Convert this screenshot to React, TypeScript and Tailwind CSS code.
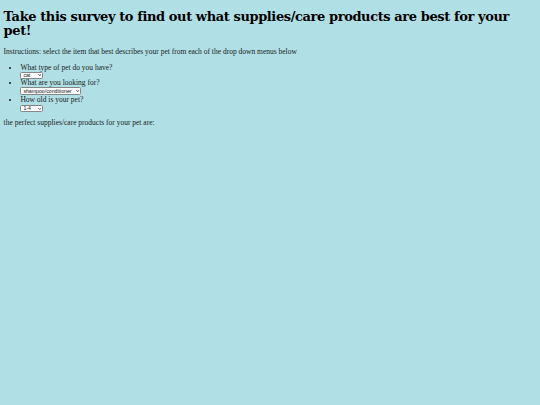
import React from "react";

const heading = { fontFamily: '"DejaVu Serif", Georgia, serif' };
const body = { fontFamily: '"Liberation Serif", "Times New Roman", serif' };
const ui = { fontFamily: '"Liberation Sans", Arial, sans-serif' };

function Dropdown({ options, width, box }: { options: string[]; width: string; box: string }) {
  return (
    <span className={`relative block ${width} ${box}`}>
      <select
        defaultValue={options[0]}
        className="block h-full w-full appearance-none rounded-[1.5px] border-[0.75px] border-[#858585] bg-white pl-[2px] pr-[6px] text-[5.2px] leading-[5px] text-[#111]"
        style={ui}
      >
        {options.map((o) => (
          <option key={o}>{o}</option>
        ))}
      </select>
      <svg className="pointer-events-none absolute right-[2px] top-1/2 h-[2.5px] w-[3.5px] -translate-y-1/2" viewBox="0 0 7 5">
        <path d="M0.8 0.8 L3.5 3.8 L6.2 0.8" fill="none" stroke="#1a1a1a" strokeWidth="1.5" />
      </svg>
    </span>
  );
}

export default function App() {
  return (
    <div className="min-h-[405px] w-full bg-[#b0e0e6] px-[3.6px] pt-[10px] text-black">
      <h1 className="text-[13px] font-bold leading-[14px] tracking-[-0.4px] text-black" style={heading}>
        Take this survey to find out what supplies/care products are best for your pet!
      </h1>
      <div className="text-[7.5px] leading-[8px] text-[#1a1a1a]" style={body}>
        <p className="mt-[10.3px]">
          Instructions: select the item that best describes your pet from each of the drop down menus below
        </p>
        <ul className="mt-[7.7px] list-disc pl-[16.8px]">
          <li>
            <div>What type of pet do you have?</div>
            <Dropdown options={["cat", "dog", "fish"]} width="w-[23px]" box="h-[7px]" />
          </li>
          <li>
            <div>What are you looking for?</div>
            <Dropdown options={["shampoo/conditioner", "food", "toys"]} width="w-[61px]" box="mt-[0.5px] mb-[1.3px] h-[7.5px]" />
          </li>
          <li>
            <div>How old is your pet?</div>
            <Dropdown options={["1-4", "5-9", "10+"]} width="w-[23px]" box="mt-[1px] h-[7px]" />
          </li>
        </ul>
        <p className="mt-[6.3px]">the perfect supplies/care products for your pet are:</p>
      </div>
    </div>
  );
}
